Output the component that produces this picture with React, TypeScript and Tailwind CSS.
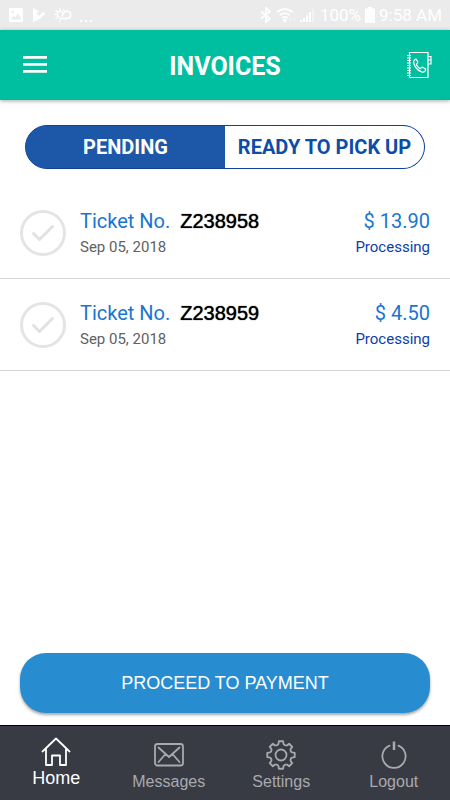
import { useState } from "react"
import type { ReactNode } from "react"
import clsx from "clsx"

const tabs = ["PENDING", "READY TO PICK UP"]

const invoices = [
  { ticket: "Z238958", date: "Sep 05, 2018", amount: "$ 13.90", status: "Processing" },
  { ticket: "Z238959", date: "Sep 05, 2018", amount: "$ 4.50", status: "Processing" },
]

// eight teeth around the centre of a 30px box
const gearPoints = Array.from({ length: 8 })
  .flatMap((_, i) =>
    [
      [-19, 10.6],
      [-13, 11.3],
      [-9, 13.9],
      [9, 13.9],
      [13, 11.3],
      [19, 10.6],
    ].map(([deg, r]) => {
      const a = ((i * 45 + deg) * Math.PI) / 180
      return `${(15 + r * Math.sin(a)).toFixed(2)},${(15 - r * Math.cos(a)).toFixed(2)}`
    })
  )
  .join(" ")

const StatusBar = () => (
  <div className="h-[30px] bg-[#ebebeb] text-white flex items-center justify-between px-2">
    <div className="flex items-center gap-2">
      <svg width="16" height="16" viewBox="0 0 16 16" fill="currentColor">
        <path
          fillRule="evenodd"
          d="M2 1h12a1 1 0 0 1 1 1v12a1 1 0 0 1-1 1H2a1 1 0 0 1-1-1V2a1 1 0 0 1 1-1zM3 12.5h10.5L10 6.5 7.2 10.5 5.5 9zM4.8 3.8a1.3 1.3 0 1 0 .01 0z"
        />
      </svg>
      <svg width="14" height="16" viewBox="0 0 14 16" fill="currentColor">
        <path d="M1 1l6 3.500-2.500 2L7 9l4-4.200 2.500 2L7.500 12 1 15V1z" />
      </svg>
      <svg width="18" height="16" viewBox="0 0 18 16" fill="none" stroke="currentColor" strokeWidth="1.5" strokeLinecap="round">
        <path d="M6 11.500h7a3.700 3.700 0 1 0-3.400-5.200L8 9" />
        <path d="M9 6.200A3 3 0 1 0 5 10" />
        <path d="M6 1.500v1M2 3.500l.7.7M.8 7.500h.4M2 11.500l.6-.6M5.800 13.500v.5M9.500 3l.3-.3" />
      </svg>
      <span className="flex gap-[3px] pt-3">
        <i className="size-[2px] bg-white" />
        <i className="size-[2px] bg-white" />
        <i className="size-[2px] bg-white" />
      </span>
    </div>
    <div className="flex items-center gap-1 text-[17px] leading-5">
      <svg width="12" height="16" viewBox="0 0 12 16" fill="none" stroke="currentColor" strokeWidth="1.7">
        <path d="M1 4.500l9 7L6 15V1l4 3.500-9 7" />
      </svg>
      <svg width="20" height="16" viewBox="0 0 20 16" fill="none" stroke="currentColor" strokeWidth="1.6">
        <path d="M1 5.200a11.500 11.500 0 0 1 15.600 0M3.800 8.200a7.500 7.500 0 0 1 10 0M6 11a4.500 4.500 0 0 1 5.600 0" />
        <circle cx="8.8" cy="13.6" r="1" fill="currentColor" />
        <path d="M14.500 14v-4m-1.500 1.500l1.500-1.500 1.500 1.500M18.500 10v4" strokeOpacity=".4" strokeWidth="1" />
      </svg>
      <svg width="16" height="16" viewBox="0 0 16 16" fill="none" stroke="currentColor" strokeWidth="2">
        <path d="M1 15v-2M4 15v-4M7 15V8.500M10 15V5" />
        <path d="M13 15V2" strokeOpacity=".4" />
      </svg>
      <span>100%</span>
      <svg width="10" height="16" viewBox="0 0 10 16" fill="currentColor">
        <path d="M3 0h4v1.500h3V16H0V1.500h3z" />
      </svg>
      <span>9:58 AM</span>
    </div>
  </div>
)

const Header = () => (
  <header className="relative h-[70px] bg-[#00bfa0] text-white grid grid-cols-[1fr_auto_1fr] items-center px-[18px] shadow-[0_1px_4px_rgba(0,0,0,0.35)]">
    <button aria-label="Menu" className="justify-self-start p-[5px]">
      <svg width="24" height="18" viewBox="0 0 24 18" fill="currentColor">
        <path d="M0 0h24v2.800H0zM0 7h24v2.800H0zM0 14h24v2.800H0z" />
      </svg>
    </button>
    <h1 className="pt-[3px] text-[25px] leading-8 font-bold">INVOICES</h1>
    <button aria-label="Contacts" className="justify-self-end">
      <svg width="26" height="28" viewBox="0 0 26 28" fill="none" stroke="currentColor" strokeWidth="1.2">
        <path d="M3.500 1.500h18.500v25H3.500zM22 5.500h3v3.500h-3M22 9h3v4h-3" />
        <path d="M1 4.500h4M1 7h4M1 9.500h4M1 12h4M1 14.500h4M1 17h4M1 19.500h4M1 22h4M1 24.500h4" />
        <path
          strokeLinejoin="round"
          d="M9.300 8.200c-1.700 1-2.100 2.500-1.400 4.600 1.200 3.600 4.300 6.900 7.800 8.100 1.700.5 3.100-.1 3.900-1.700.3-.6.1-1-.4-1.400l-2.400-1.500c-.5-.3-.9-.2-1.300.2l-.8.9c-.3.300-.7.3-1 .1-1.400-1-2.500-2.200-3.200-3.700-.2-.4-.1-.7.2-1l.8-.7c.4-.4.400-.8.2-1.300L10.400 8.600c-.2-.5-.6-.7-1.100-.4z"
        />
      </svg>
    </button>
  </header>
)

const NavItem = ({ label, active, children }: { label: string; active?: boolean; children: ReactNode }) => (
  <a
    href="#"
    aria-current={active ? "page" : undefined}
    className={clsx(
      "flex-1 flex flex-col items-center leading-6 font-['Liberation_Sans',sans-serif]",
      active ? "pt-[10px] text-white text-lg" : "pt-[14px] text-[#a9aaae] text-base"
    )}
  >
    <svg width="30" height="30" viewBox="0 0 30 30" fill="none" stroke="currentColor" strokeWidth="1.8" strokeLinejoin="round" strokeLinecap="round">
      {children}
    </svg>
    {label}
  </a>
)

const App = () => {
  const [tab, setTab] = useState(tabs[0])

  return (
    <div className="min-h-screen flex flex-col bg-white font-[Roboto,sans-serif]">
      <StatusBar />
      <Header />

      <main className="flex-1 flex flex-col">
        <div className="mx-[25px] mt-[25px] h-11 flex rounded-full border border-[#12419c] bg-[#1d58a8] overflow-hidden">
          {tabs.map((name) => (
            <button
              key={name}
              aria-pressed={tab === name}
              onClick={() => setTab(name)}
              className={clsx(
                "flex-1 basis-0 text-xl font-bold whitespace-nowrap",
                tab === name ? "bg-[#1d58a8] text-white" : "bg-white text-[#0c4da8]"
              )}
            >
              {name}
            </button>
          ))}
        </div>

        <ul className="mt-[18px]">
          {invoices.map((invoice) => (
            <li key={invoice.ticket} className="border-b border-[#d6d6d6]">
              <label className="h-[91px] px-5 flex items-center">
                <span className="relative size-[46px] mr-[14px]">
                  <input
                    type="checkbox"
                    className="block appearance-none size-full rounded-full border-[3px] border-[#e4e4e4] checked:border-[#00bfa0]"
                  />
                  <svg
                    className="absolute inset-0 pointer-events-none"
                    width="46"
                    height="46"
                    viewBox="0 0 46 46"
                    fill="none"
                    stroke="#e1e1e1"
                    strokeWidth="3"
                    strokeLinecap="round"
                    strokeLinejoin="round"
                  >
                    <path d="M13.500 23.500l6 6L32.500 16.500" />
                  </svg>
                </span>
                <span className="flex-1">
                  <span className="flex items-center gap-[10px] text-xl leading-7">
                    <span className="text-[#1a75d2]">Ticket No.</span>
                    <span className="font-['Liberation_Sans',sans-serif] text-black [text-shadow:0_0_1px_#000]">
                      {invoice.ticket}
                    </span>
                  </span>
                  <span className="block text-[15px] leading-6 text-[#616161]">{invoice.date}</span>
                </span>
                <span className="text-right">
                  <span className="block text-xl leading-7 text-[#1a75d2]">{invoice.amount}</span>
                  <span className="block text-[15px] leading-6 text-[#0d3ea8]">{invoice.status}</span>
                </span>
              </label>
            </li>
          ))}
        </ul>

        <button className="mx-5 mt-auto mb-3 h-[60px] rounded-[26px] bg-[#288dd0] text-white text-lg font-['Liberation_Sans',sans-serif] shadow-[0_2px_3px_rgba(0,0,0,0.35)]">
          PROCEED TO PAYMENT
        </button>
      </main>

      <nav className="h-[75px] flex bg-[#383a44] border-t border-black">
        <NavItem label="Home" active>
          <path d="M1.500 15.500L15 2.500l13.500 13M5 12.500V29h6v-9.500h8V29h6V12.500" />
        </NavItem>
        <NavItem label="Messages">
          <rect x="1" y="4" width="28" height="21.500" rx="2.500" />
          <path d="M4.500 7.500L15 17 25.500 7.500M4.500 22l7-8M25.500 22l-7-8" />
        </NavItem>
        <NavItem label="Settings">
          <polygon points={gearPoints} />
          <circle cx="15" cy="15" r="5.500" />
        </NavItem>
        <NavItem label="Logout">
          <path d="M10.500 5.600a11.600 11.600 0 1 0 9 0" />
          <path d="M15 1.500v8.500" strokeWidth="2.500" strokeLinecap="butt" />
        </NavItem>
      </nav>
    </div>
  )
}

export default App
